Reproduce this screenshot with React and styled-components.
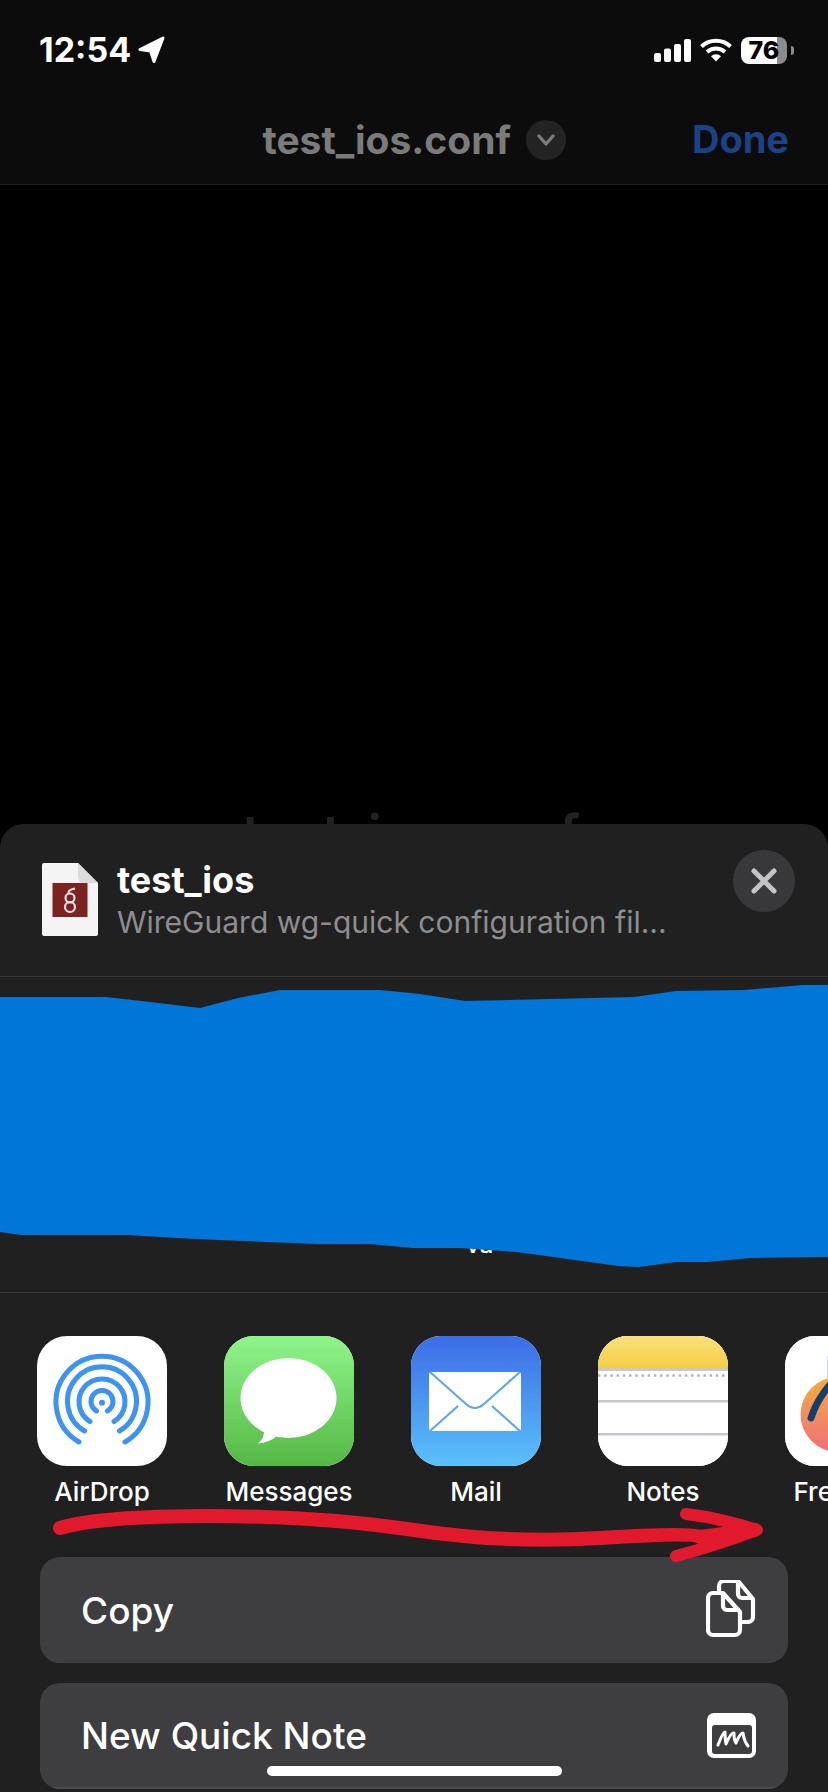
import React from 'react'
import styled, { createGlobalStyle } from 'styled-components'

const GlobalStyle = createGlobalStyle`
    html, body {
        margin: 0;
        padding: 0;
        background: #000;
    }
    * {
        box-sizing: border-box;
    }
`

const Page = styled.div`
    position: relative;
    width: 828px;
    height: 1792px;
    overflow: hidden;
    display: flex;
    flex-direction: column;
    background: #000;
    color: #fff;
    font-family: Inter, "Liberation Sans", sans-serif;
`

const Header = styled.header`
    flex: 0 0 185px;
    background: #0c0c0c;
    border-bottom: 1px solid #1b1b1b;
`

const StatusBar = styled.div`
    height: 100px;
    padding: 32px 34px 0 39px;
    display: flex;
    justify-content: space-between;
    align-items: flex-start;
`

const StatusLeft = styled.div`
    display: flex;
    align-items: center;
    gap: 7px;
    height: 36px;
`

const Time = styled.span`
    font-size: 34px;
    font-weight: 700;
    line-height: 36px;
`

const StatusRight = styled.div`
    display: flex;
    align-items: center;
    gap: 9px;
    height: 36px;
`

const Battery = styled.div`
    position: relative;
    width: 46px;
    height: 27px;
    margin-right: 7px;
    border-radius: 8px;
    background: linear-gradient(90deg, #fff 78%, #8b8b8b 78%);
    color: #000;
    font-size: 25px;
    font-weight: 800;
    line-height: 27px;
    text-align: center;

    &::after {
        content: '';
        position: absolute;
        right: -7px;
        top: 9px;
        width: 3px;
        height: 9px;
        border-radius: 0 3px 3px 0;
        background: #8b8b8b;
    }
`

const NavBar = styled.div`
    height: 84px;
    padding-right: 39px;
    display: flex;
    justify-content: flex-end;
    align-items: flex-start;
    gap: 126px;
`

const TitleGroup = styled.div`
    display: flex;
    align-items: center;
    gap: 15px;
    height: 40px;
    margin-top: 20px;
`

const DocTitle = styled.span`
    font-size: 39px;
    font-weight: 700;
    line-height: 40px;
    color: #7b7b7b;
`

const ChevronBadge = styled.span`
    width: 40px;
    height: 40px;
    border-radius: 50%;
    background: #232323;
    display: flex;
    align-items: center;
    justify-content: center;
`

const DoneLabel = styled.span`
    margin-top: 19px;
    font-size: 38px;
    font-weight: 700;
    line-height: 40px;
    color: #1c4185;
`

const Preview = styled.div`
    flex: 0 0 639px;
    overflow: hidden;
    padding: 620px 6px 0 0;
    text-align: center;
`

const PreviewName = styled.div`
    font-size: 54px;
    font-weight: 600;
    line-height: 60px;
    color: #222;
`

const Sheet = styled.section`
    flex: 1;
    min-height: 0;
    overflow: hidden;
    background: #202020;
    border-radius: 24px 24px 0 0;
`

const SheetHeader = styled.div`
    position: relative;
    height: 153px;
    padding: 39px 0 0 42px;
    display: flex;
    gap: 19px;
    border-bottom: 1px solid #3a3a3a;
`

const FileIcon = styled.svg`
    flex: none;
    width: 56px;
    height: 73px;
`

const FileText = styled.div`
    display: flex;
    flex-direction: column;
`

const FileName = styled.div`
    font-size: 36px;
    font-weight: 700;
    line-height: 36px;
    margin-top: -1px;
`

const FileKind = styled.div`
    margin-top: 6px;
    font-size: 30px;
    line-height: 36px;
    color: #8e8e8e;
`

const CloseButton = styled.div`
    position: absolute;
    top: 26px;
    right: 33px;
    width: 62px;
    height: 62px;
    border-radius: 50%;
    background: #38383a;
    display: flex;
    align-items: center;
    justify-content: center;
`

const ContactRow = styled.div`
    height: 316px;
    padding: 0 0 33px 466px;
    display: flex;
    align-items: flex-end;
    gap: 331px;
    border-bottom: 1px solid #3a3a3a;
    font-size: 24px;
    font-weight: 500;
    line-height: 28px;
    white-space: nowrap;
`

const AppsRow = styled.div`
    height: 264px;
    padding: 43px 0 0 37px;
    display: flex;
    gap: 57px;
    overflow: hidden;
`

const AppTile = styled.div`
    flex: 0 0 130px;
    display: flex;
    flex-direction: column;
    align-items: center;
`

const AppIcon = styled.div`
    width: 130px;
    height: 130px;
    border-radius: 30px;
    overflow: hidden;
    background: ${p => p.$bg || '#fff'};

    svg {
        display: block;
    }
`

const AppName = styled.div`
    margin-top: 11px;
    font-size: 26px;
    font-weight: 500;
    line-height: 30px;
    white-space: nowrap;
`

const Actions = styled.div`
    padding: 0 40px;
    display: flex;
    flex-direction: column;
    gap: 20px;
`

const ActionGroup = styled.div`
    border-radius: 20px;
    overflow: hidden;
    background: #3e3e40;
`

const ActionRow = styled.div`
    height: 106px;
    padding: 0 32px 0 41px;
    display: flex;
    align-items: center;
    justify-content: space-between;
    border-bottom: ${p => (p.$divided ? '2px solid #4c4c4e' : 'none')};
    font-size: 37px;
    font-weight: 500;
`

const Scribble = styled.svg`
    position: absolute;
    left: 0;
    top: 985px;
    width: 828px;
    height: 285px;
`

const RedArrow = styled.svg`
    position: absolute;
    left: 50px;
    top: 1505px;
    width: 720px;
    height: 60px;
`

const HomeBar = styled.div`
    position: absolute;
    left: 267px;
    top: 1766px;
    width: 295px;
    height: 10px;
    border-radius: 5px;
    background: #fff;
`

const SignalIcon = () => (
    <svg width="37" height="23" viewBox="0 0 37 23" fill="#fff">
        <rect x="0" y="14" width="7" height="9" rx="2" />
        <rect x="10" y="9.5" width="7" height="13.5" rx="2" />
        <rect x="20" y="5" width="7" height="18" rx="2" />
        <rect x="30" y="0" width="7" height="23" rx="2" />
    </svg>
)

const WifiIcon = () => (
    <svg width="32" height="24" viewBox="0 0 32 24" fill="none" stroke="#fff" strokeWidth="4">
        <path d="M1.5 8.5a21 21 0 0 1 29 0" />
        <path d="M7 14a13.5 13.5 0 0 1 18 0" />
        <path d="M16 23.5l-5-5.2a7 7 0 0 1 10 0z" fill="#fff" stroke="none" />
    </svg>
)

const AirDropArt = () => (
    <svg width="130" height="130" viewBox="0 0 130 130" fill="none" stroke="#3d93f5" strokeWidth="5" strokeLinecap="round">
        <path d="M42 106A46 46 0 1 1 88 106" />
        <path d="M47.500 95A34.500 34.500 0 1 1 82.500 95" />
        <path d="M53 85.500A23 23 0 1 1 77 85.500" />
        <path d="M59.500 75A11 11 0 1 1 70.500 75" />
        <circle cx="65" cy="66.7" r="3" fill="#3d93f5" stroke="none" />
    </svg>
)

const MessagesArt = () => (
    <svg width="130" height="130" viewBox="0 0 130 130">
        <defs>
            <linearGradient id="msgBg" x1="0" y1="0" x2="0" y2="1">
                <stop offset="0" stopColor="#8ff58b" />
                <stop offset="1" stopColor="#55b845" />
            </linearGradient>
        </defs>
        <rect width="130" height="130" fill="url(#msgBg)" />
        <ellipse cx="64.500" cy="62" rx="48" ry="40" fill="#fff" />
        <path d="M40 92Q41 102 34 107.500Q45 107 53 100Z" fill="#fff" />
    </svg>
)

const MailArt = () => (
    <svg width="130" height="130" viewBox="0 0 130 130">
        <defs>
            <linearGradient id="mailBg" x1="0" y1="0" x2="0" y2="1">
                <stop offset="0" stopColor="#3c6ce6" />
                <stop offset="1" stopColor="#5ac1f9" />
            </linearGradient>
        </defs>
        <rect width="130" height="130" fill="url(#mailBg)" />
        <rect x="18" y="36" width="92" height="59" rx="2" fill="#fff" />
        <g fill="none" stroke="#58a6f1" strokeWidth="2">
            <path d="M19 36L55 68Q64 76 73 68L109 36" />
            <path d="M19 95L47 70M109 95L81 70" />
        </g>
    </svg>
)

const NotesArt = () => (
    <svg width="130" height="130" viewBox="0 0 130 130">
        <defs>
            <linearGradient id="noteTop" x1="0" y1="0" x2="0" y2="1">
                <stop offset="0" stopColor="#f9e07c" />
                <stop offset="1" stopColor="#f6ce45" />
            </linearGradient>
        </defs>
        <rect width="130" height="130" fill="#fff" />
        <rect width="130" height="32" fill="url(#noteTop)" />
        <rect y="32" width="130" height="3" fill="#c9c9c9" />
        <line x1="0" x2="130" y1="39.500" y2="39.500" stroke="#b4b4ba" strokeWidth="2.500" strokeDasharray="2.500 3.700" />
        <rect y="64" width="130" height="2.500" fill="#c6c6cc" />
        <rect y="97" width="130" height="2.500" fill="#c6c6cc" />
    </svg>
)

const FreeformArt = () => (
    <svg width="130" height="130" viewBox="0 0 130 130">
        <defs>
            <linearGradient id="freeBg" x1="0" y1="0" x2="0" y2="1">
                <stop offset="0" stopColor="#f3ae3b" />
                <stop offset="1" stopColor="#f06f7c" />
            </linearGradient>
        </defs>
        <rect width="130" height="130" fill="#fff" />
        <circle cx="53" cy="78.500" r="37.500" fill="url(#freeBg)" />
        <path d="M43 20V42" stroke="#bfe8f4" strokeWidth="2" />
        <path d="M26 82Q33 60 52 41" fill="none" stroke="#143f6b" strokeWidth="7" strokeLinecap="round" />
    </svg>
)

const apps = [
    { name: 'AirDrop', art: <AirDropArt /> },
    { name: 'Messages', art: <MessagesArt /> },
    { name: 'Mail', art: <MailArt /> },
    { name: 'Notes', art: <NotesArt /> },
    { name: 'Freeform', art: <FreeformArt /> },
]

export default function App() {
    return (
        <Page>
            <GlobalStyle />
            <Header>
                <StatusBar>
                    <StatusLeft>
                        <Time>12:54</Time>
                        <svg width="28" height="28" viewBox="0 0 28 28">
                            <path d="M25 2L2 13.500L12.500 15L16 25.500Z" fill="#fff" stroke="#fff" strokeWidth="3" strokeLinejoin="round" />
                        </svg>
                    </StatusLeft>
                    <StatusRight>
                        <SignalIcon />
                        <WifiIcon />
                        <Battery>76</Battery>
                    </StatusRight>
                </StatusBar>
                <NavBar>
                    <TitleGroup>
                        <DocTitle>test_ios.conf</DocTitle>
                        <ChevronBadge>
                            <svg width="18" height="12" viewBox="0 0 18 12" fill="none" stroke="#7b7b7b" strokeWidth="3.400" strokeLinecap="round" strokeLinejoin="round">
                                <path d="M2 2l7 8 7-8" />
                            </svg>
                        </ChevronBadge>
                    </TitleGroup>
                    <DoneLabel>Done</DoneLabel>
                </NavBar>
            </Header>
            <Preview>
                <PreviewName>test_ios.conf</PreviewName>
            </Preview>
            <Sheet>
                <SheetHeader>
                    <FileIcon viewBox="0 0 56 73">
                        <path d="M2 0H36L56 20V71a2 2 0 0 1-2 2H2a2 2 0 0 1-2-2V2a2 2 0 0 1 2-2Z" fill="#f4f4f4" />
                        <path d="M36 0L56 20H42a6 6 0 0 1-6-6Z" fill="#dcdcdc" />
                        <rect x="10.500" y="20" width="35" height="34" fill="#7c2320" />
                        <g fill="none" stroke="#efe2df" strokeWidth="2.200">
                            <circle cx="28" cy="35" r="4.500" />
                            <circle cx="28" cy="44" r="5" />
                            <path d="M33 25.500Q25 27 27 30.500" />
                        </g>
                    </FileIcon>
                    <FileText>
                        <FileName>test_ios</FileName>
                        <FileKind>WireGuard wg-quick configuration fil...</FileKind>
                    </FileText>
                    <CloseButton>
                        <svg width="26" height="26" viewBox="0 0 26 26" fill="none" stroke="#c4c4c6" strokeWidth="5" strokeLinecap="round">
                            <path d="M3 3l20 20M23 3L3 23" />
                        </svg>
                    </CloseButton>
                </SheetHeader>
                <ContactRow>
                    <span>va</span>
                    <span>r</span>
                </ContactRow>
                <AppsRow>
                    {apps.map(app => (
                        <AppTile key={app.name}>
                            <AppIcon>{app.art}</AppIcon>
                            <AppName>{app.name}</AppName>
                        </AppTile>
                    ))}
                </AppsRow>
                <Actions>
                    <ActionGroup>
                        <ActionRow>
                            Copy
                            <svg width="50" height="60" viewBox="17 12 50 60" fill="none" stroke="#fff" strokeWidth="4.200" strokeLinejoin="round">
                                <path d="M30 25V18a5 5 0 0 1 5-5H49L64 31V49a5 5 0 0 1-5 5H51" />
                                <path d="M49 13V26a4 4 0 0 0 4 4H64" />
                                <path d="M24 25H34L51 44V62a5 5 0 0 1-5 5H24a5 5 0 0 1-5-5V30a5 5 0 0 1 5-5Z" />
                                <path d="M34 25V38a4 4 0 0 0 4 4H51" />
                            </svg>
                        </ActionRow>
                    </ActionGroup>
                    <ActionGroup>
                        <ActionRow $divided>
                            New Quick Note
                            <svg width="49" height="45" viewBox="17 14 49 45" fill="none">
                                <rect x="17" y="14" width="49" height="45" rx="7" fill="#fff" />
                                <rect x="22" y="26" width="40" height="29" rx="3" fill="#3e3e40" />
                                <path d="M28 46Q33 33 35 33Q35 40 36 45Q41 33 44 34Q44 42 46 44Q50 34 53 34Q54 42 58 47" stroke="#fff" strokeWidth="3" strokeLinecap="round" strokeLinejoin="round" />
                            </svg>
                        </ActionRow>
                    </ActionGroup>
                </Actions>
            </Sheet>
            <Scribble viewBox="0 985 828 285">
                <path
                    d="M0 997L106 997L150 1002L200 1008L238 998L280 990L380 990L420 994L465 1001L634 997L676 991L744 990L803 985L828 985L828 1257L750 1258L707 1262L676 1262L639 1267L618 1266L517 1252L459 1248L412 1248L370 1244L317 1244L195 1239L127 1235L21 1235L0 1232Z"
                    fill="#0077d8"
                />
            </Scribble>
            <RedArrow viewBox="50 1505 720 60" fill="none" stroke="#e2182c" strokeLinecap="round" strokeLinejoin="round">
                <path d="M60 1528Q100 1516 210 1516T414 1530T600 1538T700 1537L755 1530" strokeWidth="14" />
                <path d="M686 1514Q720 1518 757 1530Q715 1546 676 1556" strokeWidth="12" />
            </RedArrow>
            <HomeBar />
        </Page>
    )
}
